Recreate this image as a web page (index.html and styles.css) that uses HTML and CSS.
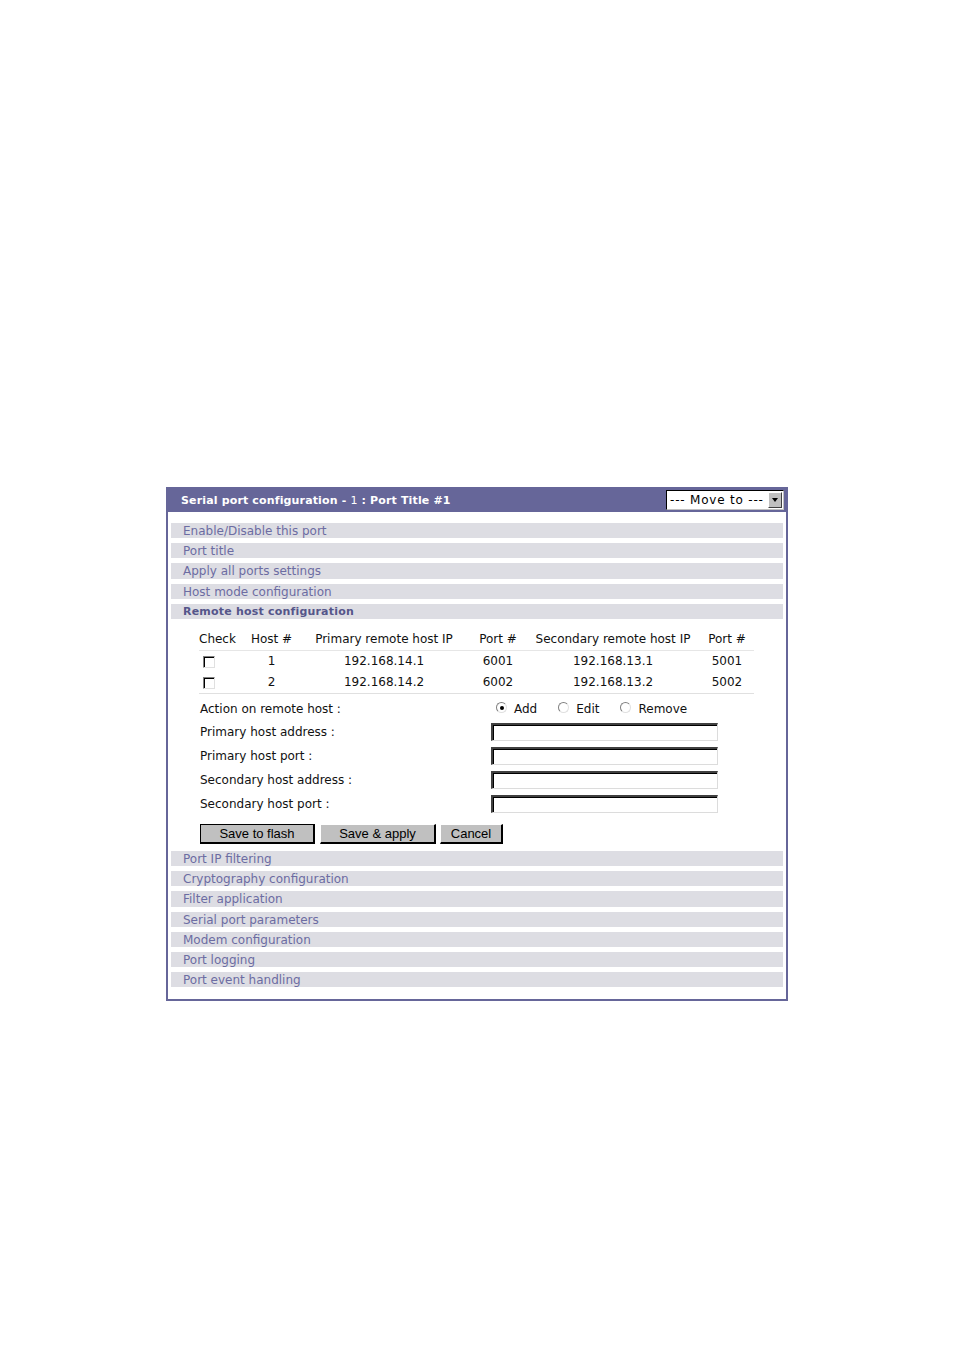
FILE: index.html
```html
<!DOCTYPE html>
<html>
<head>
<meta charset="utf-8">
<link rel="stylesheet" href="styles.css">
</head>
<body>
<div class="panel">
  <div class="head">
    <span class="title">Serial port configuration - <span class="num">1</span> : Port Title #1</span>
    <div class="select"><span class="sel-text">--- Move to ---</span><span class="sel-btn"><span class="tri"></span></span></div>
  </div>
  <div class="body">
    <div class="row">Enable/Disable this port</div>
    <div class="row">Port title</div>
    <div class="row">Apply all ports settings</div>
    <div class="row">Host mode configuration</div>
    <div class="row active">Remote host configuration</div>

    <div class="section">
      <table class="hosts">
        <thead>
          <tr>
            <th class="c1">Check</th><th class="c2">Host #</th><th class="c3">Primary remote host IP</th><th class="c4">Port #</th><th class="c5">Secondary remote host IP</th><th class="c6">Port #</th>
          </tr>
        </thead>
        <tbody>
          <tr><td class="c1"><span class="cb"></span></td><td>1</td><td>192.168.14.1</td><td>6001</td><td>192.168.13.1</td><td>5001</td></tr>
          <tr><td class="c1"><span class="cb"></span></td><td>2</td><td>192.168.14.2</td><td>6002</td><td>192.168.13.2</td><td>5002</td></tr>
        </tbody>
      </table>

      <div class="form">
        <div class="frow first">
          <span class="lbl">Action on remote host :</span>
          <div class="radios">
            <span class="radio"><span class="rb on"></span>Add</span>
            <span class="radio"><span class="rb"></span>Edit</span>
            <span class="radio"><span class="rb"></span>Remove</span>
          </div>
        </div>
        <div class="frow"><span class="lbl">Primary host address :</span><span class="inp"></span></div>
        <div class="frow"><span class="lbl">Primary host port :</span><span class="inp"></span></div>
        <div class="frow"><span class="lbl">Secondary host address :</span><span class="inp"></span></div>
        <div class="frow"><span class="lbl">Secondary host port :</span><span class="inp"></span></div>
      </div>

      <div class="buttons">
        <span class="btn def b1">Save to flash</span>
        <span class="btn b2">Save &amp; apply</span>
        <span class="btn b3">Cancel</span>
      </div>
    </div>

    <div class="row">Port IP filtering</div>
    <div class="row">Cryptography configuration</div>
    <div class="row">Filter application</div>
    <div class="row">Serial port parameters</div>
    <div class="row">Modem configuration</div>
    <div class="row">Port logging</div>
    <div class="row last">Port event handling</div>
  </div>
</div>
</body>
</html>
```
FILE: styles.css
```css
html, body {
  margin: 0;
  padding: 0;
  background: #ffffff;
}
body {
  padding-top: 487px;
  padding-left: 166px;
  font-family: "DejaVu Sans", Verdana, sans-serif;
  font-size: 12px;
}
.panel {
  width: 618px;
  border: 2px solid #666699;
  border-top: 0;
  background: #fff;
}
.head {
  height: 25px;
  background: #666699;
  margin: 0 -2px;
  display: flex;
  align-items: center;
  justify-content: space-between;
  padding: 0 4px 0 15px;
}
.title {
  color: #ffffff;
  font-weight: bold;
  font-size: 11px;
  letter-spacing: 0.15px;
  position: relative;
  top: 1px;
}
.title .num { font-weight: normal; }
.select {
  background: #fff;
  border: 1px solid #000;
  border-right-color: #c0c0c0;
  border-bottom-color: #c0c0c0;
  display: flex;
  align-items: center;
  justify-content: space-between;
  box-sizing: border-box;
  width: 118px;
  height: 20px;
  margin-top: 1px;
}
.sel-text {
  font-family: "DejaVu Sans", Verdana, sans-serif;
  font-size: 12px;
  letter-spacing: 0.8px;
  color: #000;
  padding-left: 3px;
  white-space: nowrap;
}
.sel-btn {
  width: 14px;
  height: 16px;
  flex: none;
  background: #c0c0c0;
  border-left: 1px solid #fff;
  border-top: 1px solid #fff;
  border-right: 1px solid #404040;
  border-bottom: 1px solid #404040;
  box-sizing: border-box;
  display: flex;
  align-items: center;
  justify-content: center;
  margin-right: 1px;
}
.tri {
  width: 0; height: 0;
  border-left: 3.5px solid transparent;
  border-right: 3.5px solid transparent;
  border-top: 4px solid #000;
}
.body {
  padding: 11px 3px 12px 3px;
}
.row {
  height: 15.2px;
  line-height: 16px;
  background: #dddde3;
  color: #6c6ca2;
  padding-left: 12px;
  margin-bottom: 5px;
  font-size: 12px;
  white-space: nowrap;
  overflow: hidden;
}
.row.last { margin-bottom: 0; }
.row.active {
  font-weight: bold;
  font-size: 11px;
  letter-spacing: 0.2px;
  color: #55558a;
  margin-bottom: 0;
}
.section {
  padding: 10px 0 7px 28px;
}
.hosts {
  border-collapse: collapse;
  width: 555px;
  color: #111;
  font-size: 12px;
}
.hosts th {
  font-weight: normal;
  height: 21px;
  padding: 0;
  text-align: center;
  border-bottom: 1px solid #e6e6e6;
  white-space: nowrap;
}
.hosts td {
  height: 21px;
  padding: 0;
  text-align: center;
}
.hosts tbody tr:last-child td {
  border-bottom: 1px solid #e0e0e0;
}
.hosts .c1 { width: 46px; text-align: left; }
.hosts .c2 { width: 53px; }
.hosts .c3 { width: 172px; }
.hosts .c4 { width: 56px; }
.hosts .c5 { width: 174px; }
.hosts .c6 { width: 54px; }
.cb {
  display: inline-block;
  width: 12px;
  height: 12px;
  box-sizing: border-box;
  border-top: 1px solid #808080;
  border-left: 1px solid #808080;
  border-right: 1px solid #e0e0e0;
  border-bottom: 1px solid #e0e0e0;
  box-shadow: inset 1px 1px 0 #000;
  margin-left: 4px;
  vertical-align: middle;
}
.form {
  padding-top: 4px;
  color: #111;
}
.frow {
  display: flex;
  align-items: center;
  height: 24px;
  padding-left: 1px;
}
.frow.first { height: 22px; }
.lbl {
  width: 291px;
  flex: none;
}
.inp {
  width: 227px;
  height: 18px;
  box-sizing: border-box;
  border-top: 2px solid #404040;
  border-left: 2px solid #404040;
  border-right: 1px solid #dcdcdc;
  border-bottom: 1px solid #dcdcdc;
  box-shadow: inset 1px 1px 0 #000;
  background: #fff;
}
.radios {
  display: flex;
  align-items: center;
  padding-left: 5px;
}
.radio {
  display: flex;
  align-items: center;
  margin-right: 21px;
}
.rb {
  width: 11px;
  height: 11px;
  border-radius: 50%;
  box-sizing: border-box;
  border: 1px solid #808080;
  border-right-color: #e0e0e0;
  border-bottom-color: #e0e0e0;
  background: #fff;
  margin-right: 7px;
  position: relative;
  top: -1px;
}
.rb.on::after {
  content: "";
  position: absolute;
  left: 2.5px; top: 2.5px;
  width: 4px; height: 4px;
  border-radius: 50%;
  background: #000;
}
.buttons {
  display: flex;
  padding-top: 8px;
  padding-left: 1px;
  gap: 5px;
}
.btn {
  height: 20px;
  box-sizing: border-box;
  background: #c0c0c0;
  font-family: "Liberation Sans", Arial, sans-serif;
  font-size: 13px;
  color: #000;
  display: flex;
  align-items: center;
  justify-content: center;
  border-top: 1px solid #fff;
  border-left: 1px solid #fff;
  border-right: 2px solid #000;
  border-bottom: 2px solid #000;
}
.btn.def {
  border: 1px solid #000;
  border-right-width: 2px;
  border-bottom-width: 2px;
}
.b1 { width: 115px; }
.b2 { width: 116px; }
.b3 { width: 63px; margin-left: -1px; }
```
